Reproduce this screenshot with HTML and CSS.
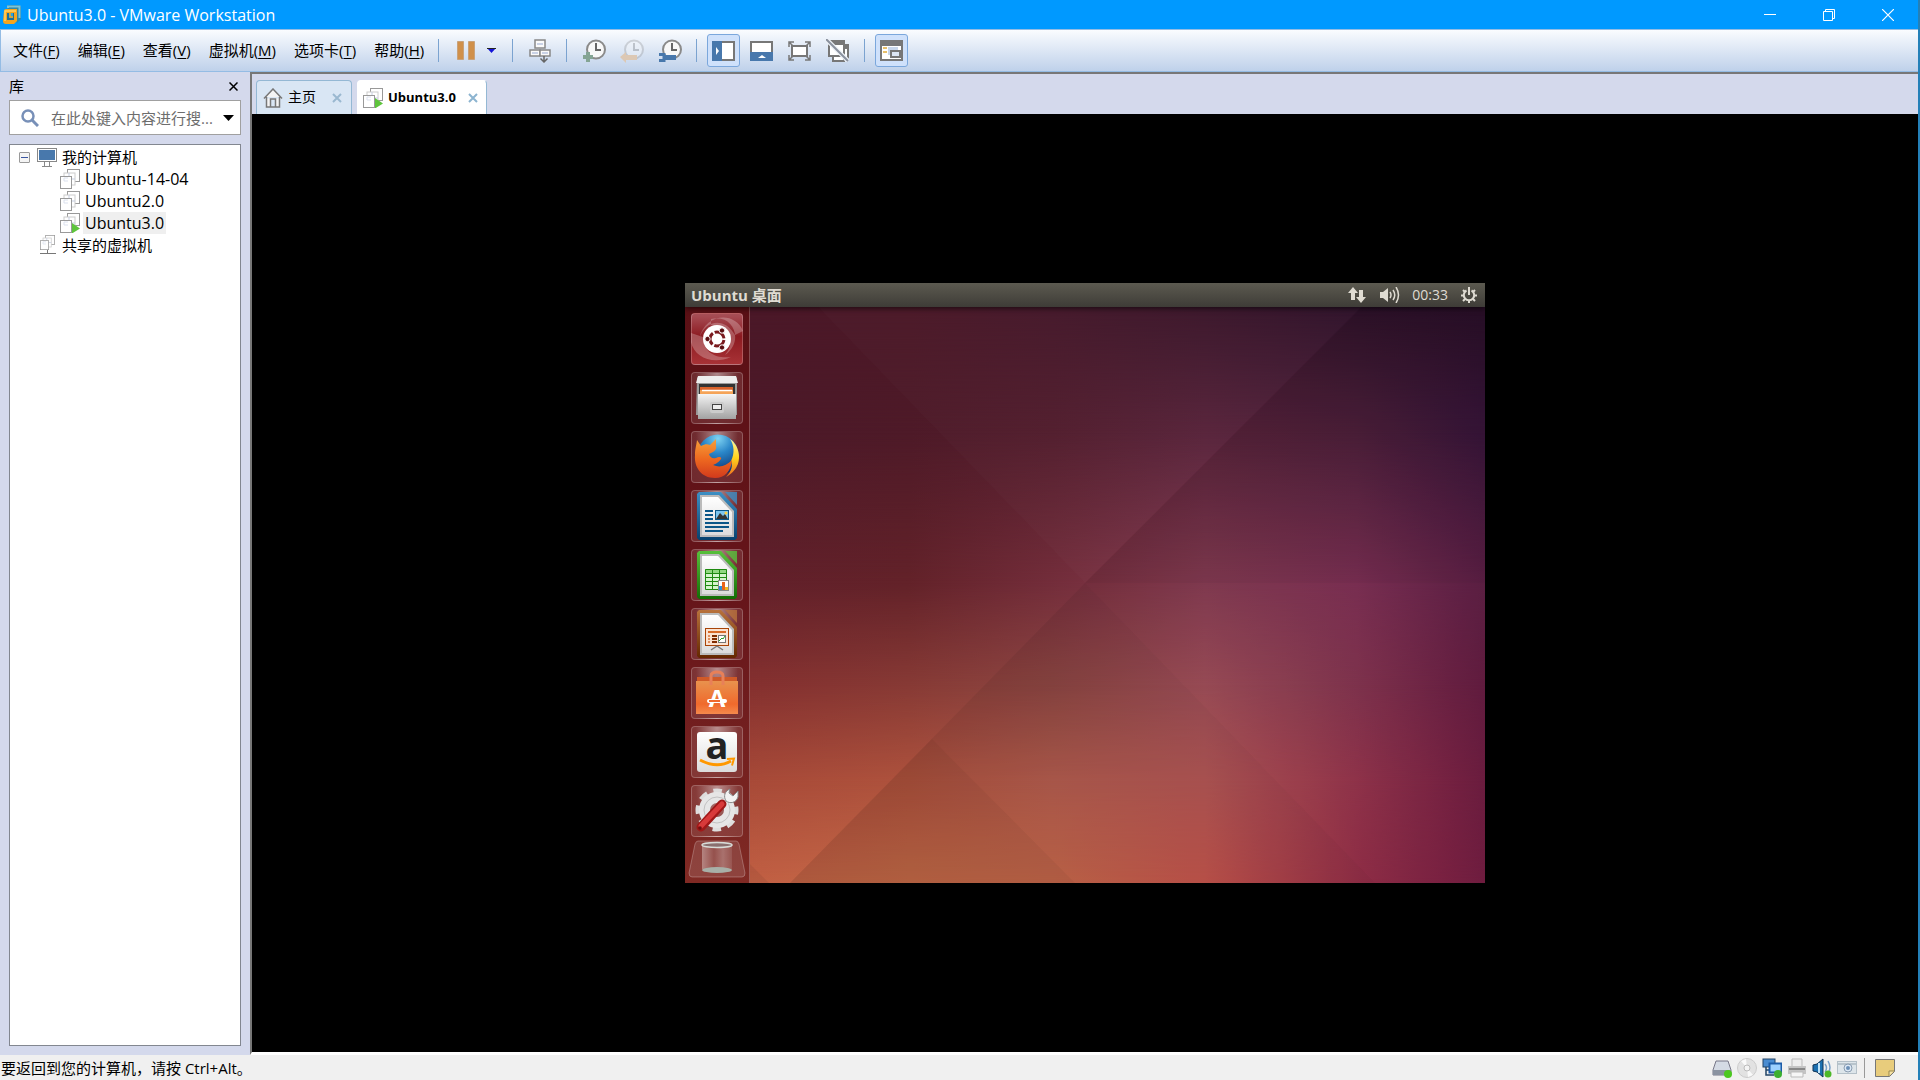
FILE: index.html
```html
<!DOCTYPE html>
<html lang="zh-CN">
<head>
<meta charset="utf-8">
<title>Ubuntu3.0 - VMware Workstation</title>
<link rel="stylesheet" href="styles.css">
</head>
<body>
<svg class="defs" width="0" height="0" aria-hidden="true">
  <defs>
    <linearGradient id="silver" x2="0" y2="1"><stop stop-color="#f4f4f4"/><stop offset="1" stop-color="#a2a2a2"/></linearGradient>
    <linearGradient id="paper" x2="0" y2="1"><stop stop-color="#fff"/><stop offset="1" stop-color="#dcdcdc"/></linearGradient>
    <linearGradient id="writer" x2="0" y2="1"><stop stop-color="#3d8fc4"/><stop offset="1" stop-color="#07426f"/></linearGradient>
    <linearGradient id="calc" x2="0" y2="1"><stop stop-color="#58c03c"/><stop offset="1" stop-color="#136e04"/></linearGradient>
    <linearGradient id="impress" x2="0" y2="1"><stop stop-color="#b8723c"/><stop offset="1" stop-color="#642700"/></linearGradient>
    <linearGradient id="bag" x2="0" y2="1"><stop stop-color="#e8924e"/><stop offset=".7" stop-color="#f06a2c"/><stop offset="1" stop-color="#f58a4c"/></linearGradient>
    <radialGradient id="globe" cx=".5" cy=".1" r=".9"><stop stop-color="#7fd3f2"/><stop offset=".4" stop-color="#2a86c8"/><stop offset="1" stop-color="#0a2a68"/></radialGradient>
    <linearGradient id="fox" x2="0" y2="1"><stop stop-color="#f6a03a"/><stop offset=".5" stop-color="#ee6a20"/><stop offset="1" stop-color="#d23a1c"/></linearGradient>
    <linearGradient id="flame" x2="0" y2="1"><stop stop-color="#fff6a0"/><stop offset=".5" stop-color="#ffd21c"/><stop offset="1" stop-color="#ee6a20"/></linearGradient>
    <linearGradient id="cyl" x2="1" y2="0"><stop stop-color="#fff" stop-opacity=".35"/><stop offset=".4" stop-color="#fff" stop-opacity=".08"/><stop offset=".7" stop-color="#fff" stop-opacity=".25"/><stop offset="1" stop-color="#fff" stop-opacity=".1"/></linearGradient>
    <symbol id="vm" viewBox="0 0 20 20">
      <rect x="7.500" y=".5" width="12" height="12" fill="#fff" stroke="#999"/>
      <rect x="4" y="4" width="11" height="12" fill="#fff" stroke="#ccc"/>
      <path d="M4 10h11M9 4v12" stroke="#c5cde0"/>
      <rect x=".5" y="7.500" width="11" height="12" fill="#fff" stroke="#999"/>
      <path d="M4 12v-3h4M8 12H4" stroke="#dbe1ee" fill="none"/>
    </symbol>
    <symbol id="vmrun" viewBox="0 0 20 20"><use href="#vm"/><path d="M12 10l8 5.500-8 5z" fill="#5ec43c"/></symbol>
    <symbol id="clock" viewBox="0 0 24 24"><circle cx="14" cy="10.500" r="9" fill="#f8f8f8" stroke="#8a8a8a" stroke-width="2"/><path d="M14 4v7h5" fill="none" stroke="#666" stroke-width="2"/></symbol>
  </defs>
</svg>

<div class="window">
  <header class="titlebar">
    <svg class="app-icon" viewBox="0 0 18 20"><path d="M4 2q0-2 2-2h10l2 2v12l-4 4z" fill="#2f87a6"/><path d="M5 3V1.500h11.500V13" fill="none" stroke="#7cc4da" stroke-width="2"/><path d="M1 6q0-2 2-2h11v12l-3 3H3q-3 0-3-3z" fill="#f5a51d"/><path d="M2 16V6h11" fill="none" stroke="#ffd164" stroke-width="1.500"/><rect x="4" y="8" width="7" height="7" fill="#1d6f9c"/><rect x="6" y="8" width="4" height="5" fill="#2ba4e0"/><path d="M7 8v4h3" fill="none" stroke="#f5a51d" stroke-width="1.500"/></svg>
    <h1 class="title">Ubuntu3.0 - VMware Workstation</h1>
    <div class="window-controls">
      <button aria-label="最小化"><svg width="12" height="12"><path d="M0 5.500h12" stroke="#fff"/></svg></button>
      <button aria-label="还原"><svg width="12" height="12"><path d="M.5 2.500h9v9h-9zM2.500 2.500v-2h9v9h-2" fill="none" stroke="#fff"/></svg></button>
      <button aria-label="关闭"><svg width="12" height="12"><path d="M0 0l12 12M12 0L0 12" stroke="#fff" stroke-width="1.200"/></svg></button>
    </div>
  </header>

  <div class="toolbar">
    <nav class="menu">
      <button>文件(<u>F</u>)</button>
      <button>编辑(<u>E</u>)</button>
      <button>查看(<u>V</u>)</button>
      <button>虚拟机(<u>M</u>)</button>
      <button>选项卡(<u>T</u>)</button>
      <button>帮助(<u>H</u>)</button>
    </nav>
    <span class="sep"></span>
    <button class="tool" aria-label="挂起"><svg width="18" height="19"><path d="M.5.5h6v18h-6zM11.500.5h6v18h-6z" fill="#d0904a" stroke="#c9a27a"/></svg></button>
    <button class="caret" aria-label="电源选项"><svg width="9" height="5"><path d="M0 0h9L4.500 5z" fill="#1414d8"/><path d="M0 .5h9" stroke="#222"/></svg></button>
    <span class="sep"></span>
    <button class="tool" aria-label="发送 Ctrl+Alt+Del"><svg width="22" height="24"><g fill="#fafafa" stroke="#888" stroke-width="1.500"><rect x="6" y="1" width="10" height="8"/><rect x="1" y="11" width="10" height="6"/><rect x="11" y="11" width="10" height="6"/></g><path d="M8 5h6M3 14h6M13 14h6" stroke="#c9d2e6" stroke-width="2"/><path d="M15 17v6M11.500 19.500L15 23l3.500-3.500" fill="none" stroke="#666" stroke-width="1.500"/></svg></button>
    <span class="sep"></span>
    <button class="tool" aria-label="拍摄快照"><svg width="24" height="24"><use href="#clock"/><path d="M6 13v10M1 18h10" stroke="#84a494" stroke-width="4"/></svg></button>
    <button class="tool" aria-label="恢复快照" disabled><svg width="24" height="24"><use href="#clock" opacity=".3"/><path d="M0 18l6-5v3h11v5H6v3z" fill="#dcc8b4"/></svg></button>
    <button class="tool" aria-label="管理快照"><svg width="24" height="24"><use href="#clock"/><path d="M7 18.500h11" stroke="#4878ac" stroke-width="5"/><path d="M1 15.500h5v6H1" fill="none" stroke="#4878ac" stroke-width="3"/></svg></button>
    <span class="sep"></span>
    <button class="tool on" aria-label="显示库" aria-pressed="true"><svg width="23" height="20"><rect x="1" y="1" width="21" height="18" fill="#fff" stroke="#777" stroke-width="2"/><path d="M0 0h10v20H0z" fill="#4878ac"/><path d="M4 6v8l3-4z" fill="#fff"/></svg></button>
    <button class="tool" aria-label="显示缩略图栏"><svg width="23" height="20"><rect x="1" y="1" width="21" height="18" fill="#fff" stroke="#777" stroke-width="2"/><path d="M0 11h23v9H0z" fill="#4878ac"/><path d="M8 17h8l-4-3z" fill="#fff"/></svg></button>
    <button class="tool" aria-label="全屏"><svg width="23" height="20"><rect x="4" y="5" width="15" height="10" fill="#fff" stroke="#777" stroke-width="2"/><path d="M1 6V1h5M1 1l4 4M17 1h5v5M22 1l-4 4M1 14v5h5M1 19l4-4M17 19h5v-5M22 19l-4-4" fill="none" stroke="#777" stroke-width="1.500"/></svg></button>
    <button class="tool" aria-label="Unity"><svg width="23" height="23"><path d="M17 6h5v13h-4v3H7v-5" fill="#fff" stroke="#777" stroke-width="2"/><rect x="3" y="2" width="15" height="15" fill="#fff" stroke="#777" stroke-width="2"/><path d="M3 1h16v5H3zM18 6h5v4h-5z" fill="#777"/><path d="M0 0l22 22" stroke="#eef2f8" stroke-width="4.500"/><path d="M0 0l22 22" stroke="#8a919e" stroke-width="2"/></svg></button>
    <span class="sep"></span>
    <button class="tool on" aria-label="控制台视图" aria-pressed="true"><svg width="23" height="21"><rect x="1" y="1" width="21" height="19" fill="#fff" stroke="#777" stroke-width="2"/><path d="M0 0h23v6H0z" fill="#777"/><path d="M3 8h4M3 12h4" stroke="#e8c06a" stroke-width="2"/><path d="M8 7h10v8H8z" fill="#c8d6ea"/><rect x="11" y="11" width="9" height="6" fill="#dce6f4" stroke="#777" stroke-width="2"/></svg></button>
  </div>

  <div class="workspace">
    <aside class="library">
      <div class="library-head"><h2>库</h2><button aria-label="关闭库"><svg width="9" height="9"><path d="M.5.5l8 8M8.500.5l-8 8" stroke="#000" stroke-width="1.500"/></svg></button></div>
      <div class="search">
        <svg width="18" height="18"><circle cx="7" cy="7" r="5.500" fill="none" stroke="#7890b8" stroke-width="2.500"/><path d="M11 11l6 6" stroke="#7890b8" stroke-width="3"/></svg>
        <input type="text" aria-label="搜索" placeholder="在此处键入内容进行搜...">
        <button aria-label="搜索选项"><svg width="11" height="6"><path d="M0 0h11L5.500 6z"/></svg></button>
      </div>
      <ul class="tree">
        <li class="node"><button class="fold" aria-label="折叠"></button><svg width="20" height="19"><rect x=".5" y=".5" width="19" height="13" fill="#fff" stroke="#888"/><path d="M2 2h16v10H2z" fill="#4878ac"/><path d="M7.500 14v4M12.500 14v4M5 18.500h10" stroke="#888"/></svg><span>我的计算机</span></li>
        <li class="node child"><svg width="20" height="20"><use href="#vm"/></svg><span>Ubuntu-14-04</span></li>
        <li class="node child"><svg width="20" height="20"><use href="#vm"/></svg><span>Ubuntu2.0</span></li>
        <li class="node child selected"><svg width="20" height="20"><use href="#vmrun"/></svg><span>Ubuntu3.0</span></li>
        <li class="node shared"><svg width="18" height="20"><svg width="17" height="15" viewBox="0 0 20 20"><use href="#vm"/></svg><path d="M8.500 15v4M1 18.500h16" stroke="#777"/></svg><span>共享的虚拟机</span></li>
      </ul>
    </aside>

    <main class="content">
      <div class="tabs" role="tablist">
        <div class="tab"><svg width="20" height="20"><path d="M1 10.500L10 1l9 9.500M3.500 9v10h13V9M7.500 19v-8h5v8" fill="#f4f4f4" stroke="#777" stroke-width="1.500"/></svg><span role="tab">主页</span><button aria-label="关闭主页"><svg width="10" height="10"><path d="M1 1l8 8M9 1L1 9" stroke="#9ab8d0" stroke-width="2"/></svg></button></div>
        <div class="tab active"><svg width="20" height="20"><use href="#vmrun"/></svg><span role="tab" aria-selected="true">Ubuntu3.0</span><button aria-label="关闭 Ubuntu3.0"><svg width="10" height="10"><path d="M1 1l8 8M9 1L1 9" stroke="#8cb4d0" stroke-width="2"/></svg></button></div>
      </div>
      <div class="stage">
        <section class="guest">
          <div class="wallpaper">
            <i class="row r1"></i><i class="row r2"></i><i class="row r3"></i><i class="row r4"></i><i class="row r5"></i><i class="row r6"></i>
            <svg class="rays" viewBox="0 0 800 600" preserveAspectRatio="none">
              <path d="M400 300L110 0h590z" fill="#fff" opacity=".015"/>
              <path d="M400 300L677 24h123v276z" fill="#000" opacity=".07"/>
              <path d="M400 300L105 600h585z" fill="#000" opacity=".06"/>
              <path d="M247 456L105 600h285z" fill="#000" opacity=".04"/>
              <path d="M64 580v20h20z" fill="#000" opacity=".06"/>
              <path d="M400 300h400v300H690z" fill="#000" opacity=".03"/>
            </svg>
          </div>
          <header class="panel">
            <span class="panel-title">Ubuntu 桌面</span>
            <svg width="18" height="16"><path d="M5 0L0 6h3v7h4V6h3zM13 16l-5-6h3V3h4v7h3z" fill="#dfdbd2"/></svg>
            <svg width="20" height="16"><path d="M0 5h3l5-4v14l-5-4H0z" fill="#dfdbd2"/><path d="M10 5q2 3 0 6M13 3q3.500 5 0 10M16 0q5 8 0 16" fill="none" stroke="#dfdbd2" stroke-width="1.500"/></svg>
            <time>00:33</time>
            <svg width="16" height="16"><path d="M10.500 3.500a5.200 5.200 0 1 1-5 0" fill="none" stroke="#dfdbd2" stroke-width="2"/><path d="M8 0v8M0 8.500h3M13 8.500h3M8 13v3M2 3l2 2M14 3l-2 2M2 14l2-2M14 14l-2-2" stroke="#dfdbd2" stroke-width="2"/></svg>
          </header>
          <nav class="launcher">
            <button class="tile dash" aria-label="Dash"><svg viewBox="0 0 52 52"><path d="M52 18C44-2 14 0 8 26c6-20 26-22 36-4zM0 20c-4 20 18 34 40 24C26 46 12 40 12 24zM20 6c22-6 34 22 14 36 10-12 6-26-14-30z" fill="#fff" opacity=".25"/><circle cx="26" cy="26" r="14" fill="#fff"/><circle cx="26" cy="26" r="7" fill="none" stroke="#7a1a1e" stroke-width="3" stroke-dasharray="12.700 2" stroke-dashoffset="-1"/><g fill="#5c1013" stroke="#fff"><circle cx="16.500" cy="26" r="2.700"/><circle cx="31" cy="17.500" r="2.700"/><circle cx="31" cy="34.500" r="2.700"/></g></svg></button>
            <button class="tile" aria-label="文件"><svg viewBox="0 0 52 52"><path d="M6 6l2-2h36l2 2v37H5z" fill="#9c9c9c"/><path d="M7 4h38l2 7H5z" fill="#eee"/><path d="M8 12h36v12H8z" fill="#333"/><path d="M9 15h33v8H9z" fill="#d9622a"/><path d="M9 18h33v5H9z" fill="#f5a458"/><path d="M11 18.500h30" stroke="#fff" stroke-width="1.500"/><path d="M7 22h38v25H7z" fill="url(#silver)"/><rect x="19" y="30" width="14" height="11" rx="2" fill="#ccc"/><rect x="21.500" y="32.500" width="9" height="5" fill="#eee" stroke="#444"/></svg></button>
            <button class="tile" aria-label="Firefox"><svg viewBox="0 0 52 52"><circle cx="27" cy="24" r="20.500" fill="url(#globe)"/><path d="M39 8c9 6 12 20 6 29-4 6-10 9-10 9 6-6 7-12 5-16 4-8 3-16-1-22z" fill="url(#flame)"/><path d="M6 9l4 6c4-2 6-2 9-1l6-6v8c1 1-1 4-3 5l-4 2c1 3 3 5 7 4 3-2 6-1 5 1-4 5-6 5-8 6 7 3 13 1 19-5-1 11-7 18-17 18C10 47 3 36 4 24c0-6 1-8 2-15z" fill="url(#fox)"/></svg></button>
            <button class="tile" aria-label="LibreOffice Writer"><svg viewBox="0 0 52 52"><path d="M6 4l2-2h22l16 17v29l-2 2H8l-2-2z" fill="url(#writer)"/><path d="M34 2h12v13z" fill="#3d8fc4" opacity=".8"/><path d="M9 5h19l15 16v26H9z" fill="#bbb"/><path d="M11 7h16l14 15v23H11z" fill="url(#paper)"/><path d="M14 21h8M14 25h8M14 29h8M14 33h24M14 37h24M14 41h18" stroke="#0a5688" stroke-width="2"/><rect x="24.500" y="20.500" width="13" height="9" fill="#7cc4ee" stroke="#0a5688"/><path d="M25 29l4-6 3 3 2-2 3 5z" fill="#333"/><circle cx="35" cy="23" r="1.500" fill="#ffd040"/></svg></button>
            <button class="tile" aria-label="LibreOffice Calc"><svg viewBox="0 0 52 52"><path d="M6 4l2-2h22l16 17v29l-2 2H8l-2-2z" fill="url(#calc)"/><path d="M34 2h12v13z" fill="#58c03c" opacity=".8"/><path d="M9 5h19l15 16v26H9z" fill="#bbb"/><path d="M11 7h16l14 15v23H11z" fill="url(#paper)"/><path d="M14 20h22v21H14z" fill="#d4f4cc"/><path d="M14 20h22v4H14z" fill="#90d880"/><path d="M14.500 20.500h21v20h-21zM14 24.500h22M14 28.500h22M14 32.500h22M14 36.500h22M21.500 20v21M28.500 20v21" fill="none" stroke="#1e8a10"/><rect x="27.500" y="31.500" width="10" height="10" fill="#fff" stroke="#888"/><path d="M29.500 41v-4" stroke="#2a90d8" stroke-width="3"/><path d="M32.500 41v-8" stroke="#e8641c" stroke-width="3"/><path d="M35.500 41v-3" stroke="#f0b820" stroke-width="3"/></svg></button>
            <button class="tile" aria-label="LibreOffice Impress"><svg viewBox="0 0 52 52"><path d="M6 4l2-2h22l16 17v29l-2 2H8l-2-2z" fill="url(#impress)"/><path d="M34 2h12v13z" fill="#b8723c" opacity=".8"/><path d="M9 5h19l15 16v26H9z" fill="#bbb"/><path d="M11 7h16l14 15v23H11z" fill="url(#paper)"/><rect x="14.500" y="20.500" width="23" height="17" fill="#fbe2d0" stroke="#a84408"/><path d="M17 24h18" stroke="#d86a28" stroke-width="2"/><path d="M17 28h2M17 31h2M17 34h2" stroke="#e09060" stroke-width="2"/><path d="M21 28h5M21 31h5M21 34h5" stroke="#802c00" stroke-width="2"/><rect x="27.500" y="27.500" width="7" height="7" fill="#fff" stroke="#777"/><path d="M28 33l3-3 1 1 2-3" stroke="#28a028" fill="none"/><path d="M26 38l-6 4M26 38l6 4" stroke="#777" stroke-width="1.500"/></svg></button>
            <button class="tile" aria-label="Ubuntu 软件中心"><svg viewBox="0 0 52 52"><path d="M6 10h40v5H6z" fill="#d05a28"/><path d="M5 14h42v33H5z" fill="url(#bag)"/><path d="M20 18V9q0-4 6-4t6 4v9" fill="none" stroke="#e88058" stroke-width="3"/><text x="26" y="40" text-anchor="middle" class="store-letter">A</text><path d="M18 34h16" stroke="#fff" stroke-width="4" stroke-linecap="round"/><path d="M18 34h11" stroke="#f06a2c" stroke-width="2"/></svg></button>
            <button class="tile" aria-label="Amazon"><svg viewBox="0 0 52 52"><rect x="6" y="6" width="40" height="40" rx="3" fill="url(#paper)"/><text x="26" y="33" text-anchor="middle" class="amazon-letter">a</text><path d="M9 34q17 9 31 1" fill="none" stroke="#ff9800" stroke-width="2.800"/><path d="M36 33l7-.5-2 7" fill="none" stroke="#ff9800" stroke-width="2"/></svg></button>
            <button class="tile" aria-label="系统设置"><svg viewBox="0 0 52 52"><circle cx="26" cy="25" r="18" fill="none" stroke="#dedede" stroke-width="7" stroke-dasharray="8 6.140" stroke-dashoffset="4"/><circle cx="26" cy="25" r="12.500" fill="none" stroke="#e6e6e6" stroke-width="11"/><circle cx="26" cy="25" r="13" fill="none" stroke="#c2c2c2"/><path d="M34 17l5-6" stroke="#eee" stroke-width="6"/><path d="M39 4c-5 2-7 7-4 12 4 3 10 2 12-4V6l-5 5-4-3z" fill="#f2f2f2" stroke="#888"/><path d="M10 42l21-23" stroke="#a01818" stroke-width="9" stroke-linecap="round"/><path d="M10 41l21-22" stroke="#d83a3a" stroke-width="5" stroke-linecap="round"/><circle cx="9" cy="43" r="1.800" fill="#701010"/></svg></button>
            <button class="trash" aria-label="回收站"><svg viewBox="0 0 58 38"><path d="M10 1h38q2 0 3 3l6 29q0 4-3 4H4q-3 0-3-4L7 4q1-3 3-3z" fill="#fff" fill-opacity=".12" stroke="#fff" stroke-opacity=".25"/><path d="M14 5h30v24q-15 6-30 0z" fill="url(#cyl)"/><ellipse cx="29" cy="30" rx="15" ry="3" fill="#a8b0a8"/><ellipse cx="29" cy="5" rx="15" ry="2.500" fill="#8a7070" stroke="#d8dcd8" stroke-width="1.500"/></svg></button>
          </nav>
        </section>
      </div>
    </main>
  </div>

  <footer class="statusbar">
    <p>要返回到您的计算机，请按 Ctrl+Alt。</p>
    <div class="devices">
      <svg width="20" height="20"><path d="M4 3h12l3 9v5H1v-5z" fill="#d4dae4" stroke="#778"/><path d="M1 12h18v5H1z" fill="#8a92a0"/><circle cx="16" cy="16" r="4" fill="#4cc820"/></svg>
      <svg width="20" height="20"><circle cx="10" cy="10" r="9.500" fill="#e2e2e2" stroke="#ccc"/><path d="M10 10L4 3l5-2zM10 10l6 7-5 2z" fill="#fafafa"/><circle cx="10" cy="10" r="3" fill="#f4f4f4" stroke="#bbb"/></svg>
      <svg width="20" height="20"><rect x="1" y="1" width="12" height="8" fill="#4a8cd0" stroke="#246"/><path d="M4 9v8h8M4 12h4" fill="none" stroke="#246" stroke-width="1.500"/><rect x="7.500" y="5.500" width="12" height="9" fill="#9cd0ff" stroke="#1c5ca8" stroke-width="2"/><circle cx="16" cy="16" r="4" fill="#3cb030"/></svg>
      <svg width="20" height="20"><path d="M5 1h10v8H5z" fill="#eee" stroke="#bbb"/><path d="M1 8h18v8H1z" fill="#c4c4c4"/><path d="M2 11h16" stroke="#888" stroke-width="2"/><path d="M4 14h12v5H4z" fill="#f6f6f6" stroke="#bbb"/></svg>
      <svg width="20" height="20"><path d="M1 7l4-1 6-5v18l-6-5-4-1z" fill="#1c70b0" stroke="#135"/><path d="M7 5v10" stroke="#bfe4fa" stroke-width="2"/><path d="M13 6q3 4 0 8M16 3q4 7 0 12" fill="none" stroke="#7aa0c8" stroke-width="1.500"/><circle cx="16" cy="16" r="3.500" fill="#4cb828"/></svg>
      <svg width="20" height="20"><rect x=".5" y="3.500" width="19" height="12" fill="#dde5ea" stroke="#b4c0c8"/><path d="M1 6h18" stroke="#b8c4cc" stroke-width="2"/><circle cx="11" cy="10" r="4" fill="#dce8f4" stroke="#8a9cb0"/><circle cx="11" cy="10" r="2" fill="#6c90b8"/></svg>
    </div>
    <svg class="note" width="20" height="18"><path d="M.5.5h19v12l-5 5H.5z" fill="#e8cc7c" stroke="#777"/><path d="M19 12h-5v5" fill="#f6e4a8" stroke="#998850"/></svg>
  </footer>
</div>
</body>
</html>
```
FILE: styles.css
```css
* { box-sizing: border-box; }

body {
  margin: 0;
  background: #2480b8;
  font: 15px/22px "Open Sans", "Noto Sans CJK SC", sans-serif;
  color: #000;
}

button {
  display: flex;
  align-items: center;
  justify-content: center;
  padding: 0;
  border: 0;
  background: none;
  font: inherit;
  color: inherit;
}

svg { display: block; flex: none; }
.defs { position: absolute; }
h1, h2, p, ul { margin: 0; padding: 0; font-size: inherit; font-weight: normal; }

.window {
  display: flex;
  flex-direction: column;
  min-height: 100vh;
  margin-right: 2px;
  background: #d4d9ec;
}

/* Title bar */
.titlebar {
  display: flex;
  align-items: center;
  height: 29px;
  padding: 0 1px 0 3px;
  background: #0099ff;
  color: #fff;
}
.title { font-size: 16px; }
.app-icon { width: 18px; height: 20px; margin-right: 6px; }
.window-controls { display: flex; margin-left: auto; }
.window-controls button { width: 59px; height: 29px; }

/* Menu and tool bar */
.toolbar {
  display: flex;
  align-items: center;
  gap: 5px;
  height: 43px;
  padding-left: 12px;
  border: 1px solid #94bce4;
  border-right: 0;
  background: linear-gradient(#fafcff, #bfd1ea);
}
.menu { display: flex; gap: 18px; margin-right: 4px; padding-bottom: 2px; }
.menu button { white-space: nowrap; }
.menu u { text-underline-offset: 2px; }
.sep { width: 1px; height: 23px; margin: 0 5px; background: #7ba3d0; }
.tool { width: 33px; height: 33px; border: 1px solid transparent; border-radius: 3px; }
.tool.on { border-color: #7ba7dc; background: #cfe1fb; }
.caret { width: 15px; height: 33px; justify-content: flex-start; }

.workspace { display: flex; flex: 1; }

/* Library */
.library {
  display: flex;
  flex-direction: column;
  width: 250px;
  padding: 0 9px 9px;
}
.library-head { display: flex; align-items: center; justify-content: space-between; height: 28px; }
.library-head button { width: 16px; height: 16px; }
.search {
  display: flex;
  align-items: center;
  height: 35px;
  margin-bottom: 9px;
  padding: 0 6px 0 11px;
  border: 1px solid #a0a0a0;
  background: #fff;
}
.search input {
  flex: 1;
  min-width: 0;
  margin-left: 12px;
  padding: 0;
  border: 0;
  font: inherit;
}
.search input::placeholder { color: #6d6d6d; opacity: 1; }
.tree {
  flex: 1;
  padding-top: 1px;
  border: 1px solid #828790;
  background: #fff;
  list-style: none;
}
.node { display: flex; align-items: center; height: 22px; padding-left: 9px; }
.node span { margin-left: 3px; padding: 0 2px; }
.fold {
  width: 11px;
  height: 11px;
  margin-right: 7px;
  border: 1px solid #999;
  border-radius: 1px;
  background: linear-gradient(#3a56a0, #3a56a0) center / 7px 1px no-repeat #f4f4f4;
}
.child { padding-left: 50px; font-size: 16px; }
.selected span { background: #efefef; }
.shared { padding-left: 29px; }

/* Tabs */
.content {
  display: flex;
  flex: 1;
  flex-direction: column;
  min-width: 0;
  border-top: 2px solid #777;
  border-left: 2px solid #777;
  border-bottom: 3px solid #fff;
}
.tabs { display: flex; align-items: flex-end; gap: 5px; height: 40px; padding-left: 4px; }
.tab {
  display: flex;
  align-items: center;
  height: 34px;
  padding: 0 9px 0 6px;
  border: 1px solid #94b8d4;
  border-bottom: 0;
  border-radius: 4px 4px 0 0;
  background: #d9e6f4;
  font-size: 14px;
}
.tab span { margin: 0 16px 0 5px; padding-bottom: 1px; }
.tab.active { background: #fff; border-left-color: #fff; border-top-color: #fff; padding: 0 8px 0 5px; font-size: 13px; font-weight: bold; }
.tab.active span { margin: 0 12px 0 5px; }

.stage {
  display: flex;
  flex: 1;
  align-items: center;
  justify-content: center;
  background: #000;
}

/* Guest desktop */
.guest {
  display: grid;
  grid-template: 24px 1fr / 65px 1fr;
  width: 800px;
  height: 600px;
}
.wallpaper { display: grid; grid-area: 1 / 1 / 3 / 3; isolation: isolate; }
.row, .rays { grid-area: 1 / 1; width: 100%; height: 100%; }
.rays { z-index: 1; }
.r1 { background: linear-gradient(90deg, #4b1828 8%, #4b1827 28%, #45182a 46%, #3a162a 65%, #2e122a 84%, #2a1028); }
.r2 { background: linear-gradient(90deg, #4c1928 8%, #4e1a28 28%, #521d2d 46%, #58233a 65%, #4e203b 84%, #38153a); mask-image: linear-gradient(transparent 4%, #000 25%); }
.r3 { background: linear-gradient(90deg, #62202a 8%, #632229 28%, #77303f 50%, #843b52 65%, #7c3054 84%, #5d2045); mask-image: linear-gradient(transparent 25%, #000 50%); }
.r4 { background: linear-gradient(90deg, #85302f 8%, #873a35 28%, #8c4642 46%, #9b4d57 65%, #82344f 84%, #641c41); mask-image: linear-gradient(transparent 50%, #000 67%); }
.r5 { background: linear-gradient(90deg, #a84a38 8%, #ae523d 28%, #b25c4e 46%, #b25654 65%, #93344c 84%, #6e1d41); mask-image: linear-gradient(transparent 67%, #000 83%); }
.r6 { background: linear-gradient(90deg, #c15f43 8%, #c46a48 28%, #c4664a 46%, #c2544c 65%, #932f48 84%, #721d42); mask-image: linear-gradient(transparent 83%, #000); }
.panel {
  display: flex;
  grid-area: 1 / 1 / 2 / 3;
  align-items: center;
  z-index: 2;
  padding: 0 8px 0 6px;
  background: linear-gradient(#5c5a50, #3e3c37);
  box-shadow: 0 2px 5px #0008;
  color: #dfdbd2;
  font-size: 14px;
}
.panel-title { margin-right: auto; font-size: 15px; font-weight: bold; }
.panel svg + svg { margin-left: 14px; }
.panel time { margin: 0 13px 0 12px; }
.launcher {
  display: flex;
  grid-area: 2 / 1;
  flex-direction: column;
  align-items: center;
  gap: 7px;
  z-index: 1;
  padding-top: 6px;
  border-right: 1px solid #ffffff40;
  background: linear-gradient(#5a1015, #66151a 50%, #802a24);
}
.tile {
  width: 52px;
  height: 52px;
  border: 1px solid #ffffff38;
  border-radius: 4px;
  background: radial-gradient(ellipse at 50% 0, #ffffff80, #ffffff1c 60%, #ffffff18);
}
.tile svg { width: 52px; height: 52px; }
.dash { background: linear-gradient(#a85058, #8c1a20 45%, #a83236); }
.trash { width: 58px; height: 38px; margin-top: -4px; }
.trash svg { width: 58px; height: 38px; }
.store-letter { font: bold 24px "Open Sans", sans-serif; fill: #fff; }
.amazon-letter { font: bold 38px "Open Sans", sans-serif; fill: #222; }

/* Status bar */
.statusbar {
  display: flex;
  align-items: center;
  height: 25px;
  padding: 0 23px 0 1px;
  background: #f0f0f0;
}
.devices { display: flex; gap: 5px; margin-left: auto; padding-right: 7px; border-right: 1px solid #999; }
.note { margin-left: 10px; }
```
